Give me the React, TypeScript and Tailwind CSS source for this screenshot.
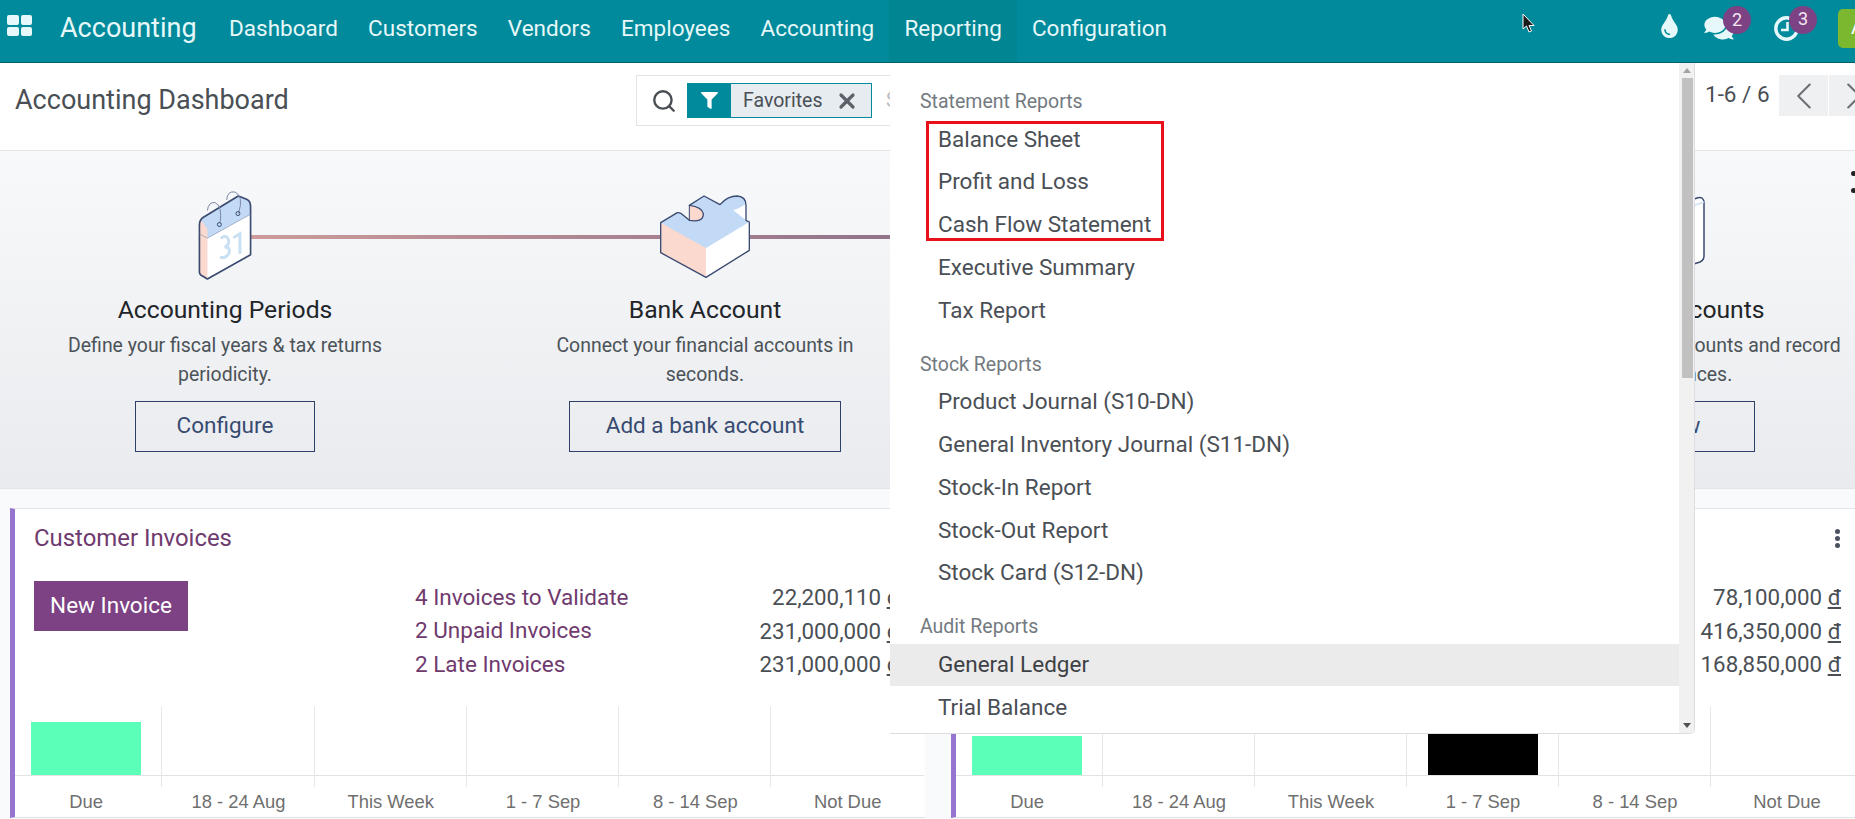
import { ChevronLeft, ChevronRight, Search, X } from "lucide-react";
import { FaComments, FaFilter, FaTint } from "react-icons/fa";

const navItems = ["Dashboard", "Customers", "Vendors", "Employees", "Accounting", "Reporting", "Configuration"];

function CalendarArt() {
  return (
    <svg width="80" height="93" viewBox="45 60 240 280" className="relative">
      <path d="M88 165 Q88 150 100 142 L205 78 L230 88 Q242 94 242 108 L242 255 L112 328 L92 316 Q88 313 88 308 Z" fill="#fff" />
      <path d="M88 165 Q88 150 100 142 L205 78 L230 88 Q242 94 242 108 L242 133 L112 205 L88 192 Z" fill="#c3daf6" />
      <path d="M88 165 Q88 158 94 152 L112 178 L112 328 L92 316 Q88 313 88 308 Z" fill="#fbd9cf" />
      <path d="M88 165 Q88 150 100 142 L205 78 L230 88 Q242 94 242 108 L242 255 L112 328 L92 316 Q88 313 88 308 Z" fill="none" stroke="#3a4a70" strokeWidth="5" strokeLinejoin="round" />
      <path d="M88 192 L112 205 L242 133" fill="none" stroke="#8a96ad" strokeWidth="2" />
      <path d="M112 122 Q115 95 135 98 Q158 108 150 160" fill="none" stroke="#7c88a3" strokeWidth="3" />
      <path d="M170 90 Q172 62 195 66 Q222 78 206 130" fill="none" stroke="#7c88a3" strokeWidth="3" />
      <circle cx="148" cy="164" r="6" fill="none" stroke="#3a4a70" strokeWidth="3" />
      <circle cx="204" cy="131" r="6" fill="none" stroke="#3a4a70" strokeWidth="3" />
      <path d="M152 205 Q172 192 176 212 Q178 226 164 232 Q184 232 176 252 Q166 268 150 262 M190 204 L210 192 L210 252" fill="none" stroke="#c9dff2" strokeWidth="9" />
    </svg>
  );
}

function PuzzleArt() {
  const outline = "M62 152 L112 122 Q122 120 130 130 L148 145 Q190 152 190 125 Q186 105 148 100 L192 72 L240 98 Q262 72 292 72 Q318 74 318 100 L318 145 L328 150 L328 235 L198 316 L62 242 Z";
  return (
    <svg width="100" height="90" viewBox="45 60 300 270" className="relative">
      <path d={outline} fill="#c3daf6" />
      <path d="M62 152 L198 228 L198 316 L62 242 Z" fill="#fbd9cf" />
      <path d="M198 228 L328 150 L328 235 L198 316 Z" fill="#fff" />
      <path d="M148 100 L148 145 Q190 152 190 125 Q186 105 148 100 Z" fill="#fbd9cf" />
      <path d="M280 115 Q300 108 318 96 L318 145 Z" fill="#fff" />
      <path d={outline} fill="none" stroke="#3a4a70" strokeWidth="4" strokeLinejoin="round" />
      <path d="M148 100 L148 145" fill="none" stroke="#3a4a70" strokeWidth="3" />
    </svg>
  );
}

function BoxArt() {
  return (
    <svg width="84" height="93" viewBox="0 0 84 93" className="relative">
      <path d="M12 30 L74 8 Q81 6 81 13 L81 66 Q81 70 77 72 L20 90 L8 80 Z" fill="#fff" stroke="#3a4a70" strokeWidth="1.5" />
      <path d="M52 22 L81 12" stroke="#cfe0f2" strokeWidth="1.5" />
    </svg>
  );
}

const steps = [
  { art: <CalendarArt />, title: "Accounting Periods", l1: "Define your fiscal years & tax returns", l2: "periodicity.", btn: "Configure", w: "w-[180px]" },
  { art: <PuzzleArt />, title: "Bank Account", l1: "Connect your financial accounts in", l2: "seconds.", btn: "Add a bank account", w: "w-[272px]" },
  { art: <BoxArt />, title: "Taxes", l1: "Set default Taxes for sales and", l2: "purchase transactions.", btn: "Review", w: "w-[180px]" },
  { art: <BoxArt />, title: "Chart of Accounts", l1: "Set up your chart of accounts and record", l2: "initial balances.", btn: "Review", w: "w-[180px]" },
];

function Step({ s }: { s: (typeof steps)[number] }) {
  return (
    <div className="w-[480px] flex flex-col items-center">
      <div className="h-[93px] flex items-center justify-center">{s.art}</div>
      <div className="mt-[11px] h-[32px] flex items-center text-[24.7px] text-[#212529]">{s.title}</div>
      <div className="mt-[5px] text-center text-[19.45px] leading-[29px] text-[#4c5358] whitespace-nowrap">
        {s.l1}
        <br />
        {s.l2}
      </div>
      <div className={`mt-[12px] h-[51px] pb-[2px] ${s.w} border border-[#2f4068] flex items-center justify-center text-[22.5px] text-[#374a70]`}>{s.btn}</div>
    </div>
  );
}

type Bar = { h: string; bg: string } | null;

function Chart({ bars, widths }: { bars: Bar[]; widths: string[] }) {
  const labels = ["Due", "18 - 24 Aug", "This Week", "1 - 7 Sep", "8 - 14 Sep", "Not Due"];
  return (
    <div className="flex">
      {labels.map((label, i) => {
        const bar = bars[i];
        return (
          <div key={label} className={`${widths[i]} shrink-0`}>
            <div className={`h-[81px] ${i < 5 ? "border-r" : ""} border-[#e8e8e8]`}>
              <div className="h-[70px] border-b border-[#e3e3e3] flex items-end justify-center">
                {bar && <div className={`w-[110px] ${bar.h} ${bar.bg} ${i === 0 ? "mr-[5px]" : ""}`} />}
              </div>
            </div>
            <div className={`h-[30px] flex items-center justify-center whitespace-nowrap [font-family:'Liberation_Sans',sans-serif] text-[18.4px] text-[#6f6f6f] ${i === 0 ? "pr-[5px]" : ""}`}>{label}</div>
          </div>
        );
      })}
    </div>
  );
}

function Amount({ v }: { v: string }) {
  return (
    <span className="text-[22.3px] text-[#4a4f55] whitespace-nowrap">
      {v} <span className="underline">đ</span>
    </span>
  );
}

function Card({ title, btn, rows, bars, dots, mr, widths }: { title: string; btn: string; rows: [string, string][]; bars: Bar[]; dots?: boolean; mr: string; widths: string[] }) {
  return (
    <div className={`w-[915px] shrink-0 ${mr} h-[310px] bg-white border-l-[5px] border-l-[#9575d0] border-t border-b border-[#e4e5e9] flex flex-col`}>
      <div className="h-[60px] pl-[19px] pr-[14px] flex items-center justify-between">
        <span className="text-[23.9px] text-[#6f3a6e]">{title}</span>
        {dots && (
          <span className="flex flex-col gap-[2px] mr-[12px] -mt-[2px]">
            <i className="w-[5px] h-[5px] rounded-full bg-[#4a5160]" />
            <i className="w-[5px] h-[5px] rounded-full bg-[#4a5160]" />
            <i className="w-[5px] h-[5px] rounded-full bg-[#4a5160]" />
          </span>
        )}
      </div>
      <div className="mt-[12px] h-[125px] pl-[19px] flex">
        <div className="w-[381px] shrink-0">
          <div className="w-[154px] h-[50px] bg-[#7c4283] text-white text-[22.5px] flex items-center justify-center">{btn}</div>
        </div>
        <div className="w-[485px] shrink-0">
          {rows.map(([a, b]) => (
            <div key={a} className="h-[33.5px] flex items-center justify-between">
              <span className="text-[22.5px] text-[#6f3a6e]">{a}</span>
              <Amount v={b} />
            </div>
          ))}
        </div>
      </div>
      <Chart bars={bars} widths={widths} />
    </div>
  );
}

const menu: { head: string; items: string[] }[] = [
  { head: "Statement Reports", items: ["Balance Sheet", "Profit and Loss", "Cash Flow Statement", "Executive Summary", "Tax Report"] },
  { head: "Stock Reports", items: ["Product Journal (S10-DN)", "General Inventory Journal (S11-DN)", "Stock-In Report", "Stock-Out Report", "Stock Card (S12-DN)"] },
  { head: "Audit Reports", items: ["General Ledger", "Trial Balance"] },
];

function Dropdown() {
  return (
    <div className="absolute left-[890px] top-[63px] w-[805px] h-[671px] z-20 bg-white border-b border-r border-[#dcdde0] rounded-br-[5px] overflow-hidden flex">
      <div className="w-[789px] shrink-0 pt-[22px]">
        {menu.map((g, gi) => (
          <div key={g.head} className={gi > 0 ? "mt-[16px]" : ""}>
            <div className="h-[33px] pl-[30px] flex items-center text-[19.5px] text-[#737a80]">{g.head}</div>
            {g.items.map((it) => (
              <div key={it} className={`h-[42.75px] pl-[48px] flex items-center text-[22.5px] ${it === "General Ledger" ? "bg-[#ebebeb] text-[#3d4145]" : "text-[#4a4f55]"}`}>
                {it}
              </div>
            ))}
          </div>
        ))}
      </div>
      <div className="w-[16px] shrink-0 bg-[#f1f1f1] flex flex-col items-center">
        <div className="h-[15px] flex items-center justify-center">
          <div className="w-0 h-0 border-x-[4px] border-x-transparent border-b-[5px] border-b-[#a3a3a3]" />
        </div>
        <div className="w-[11px] h-[300px] bg-[#c1c1c1]" />
        <div className="flex-1" />
        <div className="h-[15px] flex items-center justify-center">
          <div className="w-0 h-0 border-x-[4px] border-x-transparent border-t-[5px] border-t-[#505050]" />
        </div>
      </div>
    </div>
  );
}

function Badge({ n, pos }: { n: number; pos: string }) {
  return (
    <span className={`absolute ${pos} w-[28px] h-[28px] rounded-full bg-[#7c4283] text-[#f3e6f3] text-[18px] pb-[2px] flex items-center justify-center`}>{n}</span>
  );
}

export default function App() {
  return (
    <div className="relative w-[1855px] h-[819px] overflow-hidden bg-[#f9fafb] [font-family:Roboto,sans-serif]">
      <header className="h-[63px] bg-[#008a9b] border-b border-[#00616e] flex items-stretch text-[#e6f8f9] w-[1920px]">
        <div className="w-[60px] shrink-0 flex items-start pt-[15px] pl-[7px]">
          <div className="grid grid-cols-2 gap-[2px]">
            <i className="w-[11.5px] h-[9.5px] rounded-[2px] bg-[#e6f8f9]" />
            <i className="w-[11.5px] h-[9.5px] rounded-[2px] bg-[#e6f8f9]" />
            <i className="w-[11.5px] h-[9.5px] rounded-[2px] bg-[#e6f8f9]" />
            <i className="w-[11.5px] h-[9.5px] rounded-[2px] bg-[#e6f8f9]" />
          </div>
        </div>
        <div className="w-[154px] shrink-0 flex items-center text-[27px] pb-[5px]">Accounting</div>
        {navItems.map((n) => (
          <div key={n} className={`px-[15.1px] pb-[5px] flex items-center text-[22.5px] ${n === "Reporting" ? "bg-[#008593]" : ""}`}>
            {n}
          </div>
        ))}
        <div className="w-[478px] shrink-0" />
        <div className="flex items-center pb-[6px]">
          <FaTint className="w-[19px] h-[24px] mb-[5px]" />
          <span className="relative ml-[25px]">
            <FaComments className="w-[30px] h-[26px]" />
            <Badge n={2} pos="-top-[9px] -right-[17px]" />
          </span>
          <span className="relative ml-[40px]">
            <svg className="w-[25px] h-[25px] block" viewBox="0 0 25 25" fill="none" stroke="currentColor">
              <circle cx="12.5" cy="12.5" r="10.7" strokeWidth="3.4" />
              <path d="M13.5 6 L13.5 14 L7 14" strokeWidth="2.6" />
            </svg>
            <Badge n={3} pos="-top-[10px] -right-[18px]" />
          </span>
          <div className="ml-[39px] w-[40px] h-[39px] rounded-[5px] bg-[#7cb82f] text-white text-[21px] flex items-center pl-[13px]">A</div>
        </div>
      </header>

      <div className="h-[88px] w-[1920px] bg-white border-b border-[#e4e5e9] flex items-start pt-[12px] pl-[15px]">
        <div className="w-[621px] shrink-0 h-[51px] flex items-center text-[27px] text-[#4a4f55]">Accounting Dashboard</div>
        <div className="w-[1056px] shrink-0 h-[51px] border border-[#e1e3e6] flex items-center">
          <Search className="w-[26px] h-[26px] ml-[14px] text-[#4a4f55]" strokeWidth={2.2} />
          <div className="ml-[10px] h-[35px] w-[185px] border border-[#008a9b] bg-[#e6ecf0] flex items-center">
            <div className="w-[43px] h-full bg-[#008a9b] flex items-center justify-center">
              <FaFilter className="w-[17px] h-[17px] text-white" />
            </div>
            <span className="ml-[12px] text-[19.5px] text-[#4a4f55]">Favorites</span>
            <X className="ml-[13px] w-[24px] h-[24px] text-[#5c6269]" strokeWidth={3.2} />
          </div>
          <span className="ml-[14px] text-[19.5px] text-[#b9bcc0]">Search...</span>
        </div>
        <div className="w-[87px] shrink-0 h-[41px] pl-[13px] pb-[2px] flex items-center text-[22.5px] text-[#4a4f55] whitespace-nowrap">1-6 / 6</div>
        <div className="w-[49px] h-[41px] bg-[#eff0f2] flex items-center justify-center text-[#6b7076]">
          <ChevronLeft className="w-[46px] h-[46px] shrink-0" strokeWidth={1.1} />
        </div>
        <div className="ml-[1px] w-[49px] h-[41px] bg-[#eff0f2] flex items-center justify-center text-[#6b7076]">
          <ChevronRight className="w-[46px] h-[46px] shrink-0" strokeWidth={1.1} />
        </div>
      </div>

      <div className="relative h-[338px] w-[1920px] border-b border-[#e2e4e8] bg-gradient-to-b from-[#f8f9fb] to-[#e9ebee] pt-[39px]">
        <div className="absolute left-[225px] top-[84px] w-[1440px] h-[4px] bg-gradient-to-r from-[#cf9c9b] to-[#514472]" />
        <div className="absolute left-[1851px] top-[20px] flex flex-col gap-[12px]">
          <i className="w-[5px] h-[5px] rounded-full bg-[#222]" />
          <i className="w-[5px] h-[5px] rounded-full bg-[#222]" />
        </div>
        <div className="relative flex -ml-[15px]">
          {steps.map((s) => (
            <Step key={s.title} s={s} />
          ))}
        </div>
      </div>

      <div className="mt-[19px] pl-[10px] flex w-[1920px]">
        <Card
          title="Customer Invoices"
          btn="New Invoice"
          mr="mr-[26px]"
          widths={["w-[147.3px]", "w-[152.3px]", "w-[152.3px]", "w-[152.3px]", "w-[152.3px]", "w-[152.3px]"]}
          rows={[
            ["4 Invoices to Validate", "22,200,110"],
            ["2 Unpaid Invoices", "231,000,000"],
            ["2 Late Invoices", "231,000,000"],
          ]}
          bars={[{ h: "h-[53px]", bg: "bg-[#5cffb8]" }, null, null, null, null, null]}
        />
        <Card
          title="Vendor Bills"
          btn="Upload"
          mr=""
          dots
          widths={["w-[147px]", "w-[152px]", "w-[152px]", "w-[152px]", "w-[152px]", "w-[152px]"]}
          rows={[
            ["4 Bills to Validate", "78,100,000"],
            ["6 Bills to Pay", "416,350,000"],
            ["3 Late Bills", "168,850,000"],
          ]}
          bars={[{ h: "h-[39px]", bg: "bg-[#5cffb8]" }, null, null, { h: "h-[58px]", bg: "bg-black" }, null, null]}
        />
      </div>

      <Dropdown />

      <div className="absolute left-[926px] top-[121px] w-[238px] h-[120px] border-[3px] border-[#e8101a] z-30" />

      <svg className="absolute left-[1522px] top-[13px] z-30" width="14" height="21" viewBox="0 0 14 21">
        <path d="M1 1 L1 16 L4.5 13 L7 19 L9.5 18 L7 12.5 L12 12.5 Z" fill="#1a1a1a" stroke="#fff" strokeWidth="1" />
      </svg>
    </div>
  );
}
